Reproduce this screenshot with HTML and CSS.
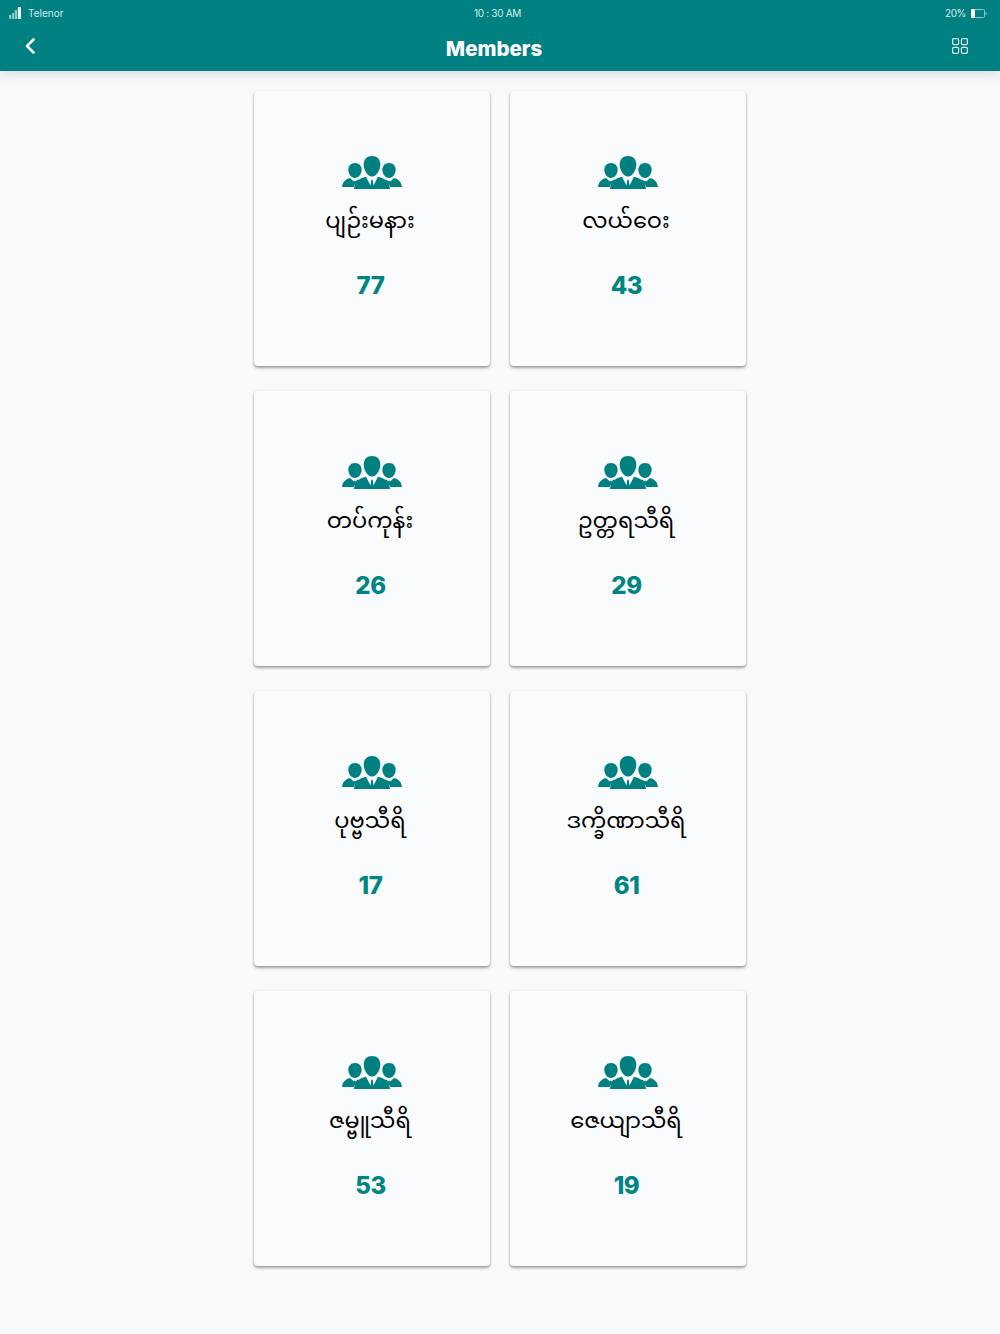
FILE: index.html
```html
<!DOCTYPE html>
<html lang="my">
<head>
<meta charset="utf-8">
<title>Members</title>
<link rel="stylesheet" href="styles.css">
</head>
<body>
<svg class="defs" width="0" height="0" aria-hidden="true">
  <symbol id="people" viewBox="0 0 60 34">
    <path d="M13 7c4 0 6.700 2.900 6.700 6.800 0 3.900-2.800 8.200-6.700 8.200s-6.700-4.300-6.700-8.200C6.300 9.900 9 7 13 7z"/>
    <path d="M47 7c4 0 6.700 2.900 6.700 6.800 0 3.900-2.800 8.200-6.700 8.200s-6.700-4.300-6.700-8.200C40.300 9.900 43 7 47 7z"/>
    <path d="M30 0c5 0 8.300 3.400 8.300 8.400 0 5.500-3.800 12.100-8.300 12.100s-8.300-6.600-8.300-12.100C21.700 3.400 25 0 30 0z"/>
    <path d="M0 31c.7-5 3-7.500 8-9l3.800 3.600.9-1 .9 1 2-2.200 2.900 1c-3.500 1.600-5.800 3.800-6.800 6.600z"/>
    <path d="M60 31c-.7-5-3-7.500-8-9l-3.800 3.600-.9-1-.9 1-2-2.200-2.900 1c3.500 1.600 5.800 3.800 6.800 6.600z"/>
    <path d="M12 33c.8-6.800 3.800-10.200 12-12.200l4.500 8.700.8-5.800h1.400l.8 5.800 4.500-8.700c8.200 2 11.200 5.400 12 12.200z"/>
  </symbol>
</svg>
<header class="appbar">
  <div class="status">
    <div class="status-left">
      <svg class="signal" width="12" height="12" viewBox="0 0 12 12"><path class="dim" d="M0 8h2.200v4H0zM3 6h2.200v6H3zM5.800 3H8v9H5.800z"/><path class="lit" d="M8.800 0H12v12H8.800z"/></svg>
      <span>Telenor</span>
    </div>
    <span class="clock">10 : 30 AM</span>
    <div class="status-right">
      <span class="percent">20%</span>
      <svg class="battery" width="16" height="9" viewBox="0 0 16 9"><rect class="batt-shell" x=".5" y=".5" width="13" height="8" rx="1"/><rect class="batt-fill" x="0" y="0" width="4" height="9" rx="1"/><path class="batt-tip" d="M14.500 3h1v3h-1z"/></svg>
    </div>
  </div>
  <div class="toolbar">
    <svg class="back" width="12" height="16" viewBox="0 0 12 16"><path d="M9.500 1.500L3 8l6.500 6.500"/></svg>
    <h1>Members</h1>
    <svg class="grid-icon" width="16" height="16" viewBox="0 0 16 16"><rect x=".6" y=".6" width="6" height="6" rx="1.300"/><rect x="9.400" y=".6" width="6" height="6" rx="1.300"/><rect x=".6" y="9.400" width="6" height="6" rx="1.300"/><rect x="9.400" y="9.400" width="6" height="6" rx="1.300"/></svg>
  </div>
</header>
<main class="cards">
  <article class="card"><svg class="people"><use href="#people"/></svg><p class="name">ပျဉ်းမနား</p><p class="count">77</p></article>
  <article class="card"><svg class="people"><use href="#people"/></svg><p class="name">လယ်ဝေး</p><p class="count">43</p></article>
  <article class="card"><svg class="people"><use href="#people"/></svg><p class="name">တပ်ကုန်း</p><p class="count">26</p></article>
  <article class="card"><svg class="people"><use href="#people"/></svg><p class="name">ဥတ္တရသီရိ</p><p class="count">29</p></article>
  <article class="card"><svg class="people"><use href="#people"/></svg><p class="name">ပုဗ္ဗသီရိ</p><p class="count">17</p></article>
  <article class="card"><svg class="people"><use href="#people"/></svg><p class="name">ဒက္ခိဏာသီရိ</p><p class="count">61</p></article>
  <article class="card"><svg class="people"><use href="#people"/></svg><p class="name">ဇမ္ဗူသီရိ</p><p class="count">53</p></article>
  <article class="card"><svg class="people"><use href="#people"/></svg><p class="name">ဇေယျာသီရိ</p><p class="count">19</p></article>
</main>
</body>
</html>
```
FILE: styles.css
```css
* { box-sizing: border-box; }
html, body { margin: 0; height: 100%; }
body {
  background: #f9fafc;
  font-family: Inter, "Open Sans", "Liberation Sans", sans-serif;
  overflow: hidden;
}
.defs { display: block; height: 0; }
.appbar {
  height: 71px;
  background: #008080;
  color: #fff;
  box-shadow: 0 2px 12px rgba(60, 60, 90, .2);
  display: flex;
  flex-direction: column;
}
.status {
  height: 26px;
  padding: 0 13px 0 9px;
  display: grid;
  grid-template-columns: 1fr auto 1fr;
  align-items: center;
  font-size: 10px;
  color: #d5ecec;
}
.status-left { display: flex; align-items: center; gap: 7px; }
.status-right { display: flex; align-items: center; justify-content: flex-end; gap: 5px; }
.clock { margin-left: -1px; letter-spacing: -.3px; }
.percent { letter-spacing: -.4px; }
.signal .dim { fill: #8fc8c8; }
.signal .lit { fill: #eef8f8; }
.batt-shell { fill: none; stroke: #8cc5c5; }
.batt-fill { fill: #fff; }
.batt-tip { fill: #8cc5c5; }
.toolbar {
  flex: 1;
  display: flex;
  align-items: center;
  justify-content: space-between;
  padding: 0 32px 5px 24px;
}
.toolbar h1 {
  margin: 7px 0 0 0;
  font-size: 20.500px;
  font-weight: 800;
  line-height: 1;
}
.back path { fill: none; stroke: #fff; stroke-width: 2.500; stroke-linecap: round; stroke-linejoin: round; }
.grid-icon { width: 16px; height: 16px; }
.grid-icon rect { fill: none; stroke: #d8eeee; stroke-width: 1.200; }
.cards {
  width: 492px;
  margin: 20px auto 0;
  display: grid;
  grid-template-columns: 236px 236px;
  grid-auto-rows: 275px;
  column-gap: 20px;
  row-gap: 25px;
}
.card {
  background: #fafbfd;
  border-radius: 4px;
  box-shadow: 0 2px 3px rgba(50, 50, 50, .45), 0 0 2px rgba(60, 60, 60, .1);
  padding-top: 65px;
  display: flex;
  flex-direction: column;
  align-items: center;
}
.people { width: 60px; height: 34px; fill: #008080; flex: none; }
.name {
  margin: 11px 0 0 -4px;
  height: 44px;
  font-family: "Noto Sans Myanmar", "Padauk", "Noto Sans", sans-serif;
  font-size: 22.500px;
  line-height: 44px;
  color: #000;
}
.count {
  margin: 25px 0 0 -3px;
  font-size: 24px;
  font-weight: 800;
  line-height: 32px;
  letter-spacing: -.4px;
  color: #008582;
}
```
